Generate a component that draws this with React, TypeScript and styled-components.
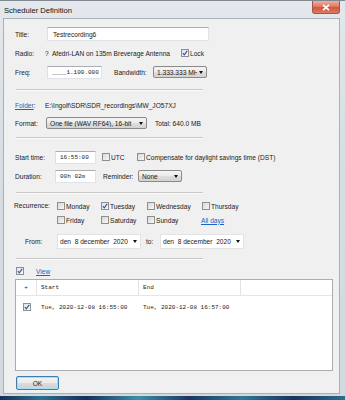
import React from 'react';
import styled, { createGlobalStyle } from 'styled-components';

const GlobalStyle = createGlobalStyle`
  html, body {
    margin: 0;
    padding: 0;
  }
  body {
    width: 345px;
    height: 400px;
    overflow: hidden;
    font-family: "Liberation Sans", Arial, sans-serif;
    font-size: 6.6px;
    color: #1a1a1a;
  }
`;

const Desktop = styled.div`
  width: 345px;
  height: 400px;
  display: flex;
  flex-direction: column;
  background: linear-gradient(90deg, #16305a, #2b7090 12%, #152f5c 25%, #3a91a8 40%, #1b3662 55%, #2e7a96 70%, #183360 85%, #2d6c8c);
`;

const Window = styled.div`
  height: 396px;
  box-sizing: border-box;
  display: flex;
  flex-direction: column;
  padding: 0 5px 2px 3px;
  background: linear-gradient(#e4e8ec, #d8dde3 40%, #d3d9df);
  border-top: 1px solid #7f8891;
`;

const TitleBar = styled.div`
  height: 17px;
  display: flex;
  align-items: flex-start;
  justify-content: space-between;
`;

const Caption = styled.span`
  font-size: 7.6px;
  color: #111;
  margin-top: 5px;
  padding-left: 1px;
`;

const CloseButton = styled.div`
  width: 28px;
  height: 13px;
  box-sizing: border-box;
  display: flex;
  align-items: center;
  justify-content: center;
  border: 1px solid #a4564a;
  border-top: none;
  border-radius: 0 0 3px 3px;
  background: linear-gradient(#eeb0a2, #e07a66 45%, #d4553f 55%, #e07a62);
`;

const Panel = styled.div`
  flex: 1;
  display: flex;
  flex-direction: column;
  background: #f0f0f0;
  border: 1px solid #a9b0b8;
  padding: 7px 0 0 11px;
`;

const Row = styled.div<{ h?: number; mt?: number }>`
  display: flex;
  align-items: center;
  height: ${p => p.h ?? 16}px;
  margin-top: ${p => p.mt ?? 0}px;
  white-space: nowrap;
`;

const Label = styled.span<{ w: number; indent?: number; ml?: number }>`
  flex: none;
  width: ${p => p.w}px;
  padding-left: ${p => p.indent ?? 0}px;
  margin-left: ${p => p.ml ?? 0}px;
  box-sizing: border-box;
`;

const Text = styled.span<{ ml?: number; w?: number }>`
  flex: none;
  margin-left: ${p => p.ml ?? 0}px;
  ${p => (p.w ? `width: ${p.w}px;` : '')}
`;

const TextBox = styled.div<{ w: number; h?: number; mono?: boolean }>`
  flex: none;
  width: ${p => p.w}px;
  height: ${p => p.h ?? 14}px;
  box-sizing: border-box;
  display: flex;
  align-items: center;
  padding-left: ${p => (p.mono ? 4 : 5)}px;
  background: #fff;
  border: 1px solid #e2e3ea;
  border-top-color: #abadb3;
  border-left-color: #dbdfe6;
  font-family: ${p => (p.mono ? '"Liberation Mono", "Courier New", monospace' : 'inherit')};
  font-size: ${p => (p.mono ? '6px' : 'inherit')};
`;

const Combo = styled.div<{ w: number }>`
  flex: none;
  width: ${p => p.w}px;
  height: 12px;
  box-sizing: border-box;
  display: flex;
  align-items: center;
  padding: 0 3px;
  border: 1px solid #8a8a8a;
  border-radius: 2px;
  background: linear-gradient(#f4f4f4, #ebebeb 50%, #dedede 51%, #d3d3d3);
`;

const ComboText = styled.span`
  flex: 1;
  overflow: hidden;
`;

const Arrow = styled.span`
  flex: none;
  width: 0;
  height: 0;
  margin-left: 2px;
  border-left: 2.5px solid transparent;
  border-right: 2.5px solid transparent;
  border-top: 3px solid #111;
`;

const DatePicker = styled.div<{ w: number }>`
  flex: none;
  width: ${p => p.w}px;
  height: 15px;
  box-sizing: border-box;
  display: flex;
  align-items: center;
  padding: 0 3px 0 2px;
  background: #fff;
  border: 1px solid #e3e3e3;
`;

const Separator = styled.div<{ mt: number }>`
  width: 187px;
  height: 1px;
  margin: ${p => p.mt}px 0 0 1px;
  background: #c8c8c8;
  border-bottom: 1px solid #fbfbfb;
`;

const Link = styled.span<{ ml?: number }>`
  flex: none;
  color: #1b63c6;
  text-decoration: underline;
  margin-left: ${p => p.ml ?? 0}px;
`;

const CheckItem = styled.span<{ w?: number; ml?: number }>`
  flex: none;
  display: flex;
  align-items: center;
  gap: 1px;
  margin-left: ${p => p.ml ?? 0}px;
  ${p => (p.w ? `width: ${p.w}px;` : '')}
`;

const Box = styled.span<{ on?: boolean }>`
  flex: none;
  width: 8px;
  height: 8px;
  box-sizing: border-box;
  display: flex;
  align-items: center;
  justify-content: center;
  border: 1px solid #8e8f8f;
  background: ${p =>
    p.on
      ? 'linear-gradient(135deg, #dde4f0, #f6f8fc)'
      : 'linear-gradient(135deg, #d8d8d8, #f7f7f7)'};
`;

const RecurGrid = styled.div`
  display: grid;
  grid-template-columns: 44px 46px 55px auto;
  grid-auto-rows: 14px;
  align-items: center;
`;

const ListBox = styled.div`
  width: 318px;
  height: 92px;
  margin-top: 1px;
  box-sizing: border-box;
  background: #fff;
  border: 1px solid #a9acb2;
  display: flex;
  flex-direction: column;
  font-family: "Liberation Mono", "Courier New", monospace;
  font-size: 6px;
`;

const ListRow = styled.div<{ header?: boolean }>`
  display: grid;
  grid-template-columns: 21px 102px 102px 1fr;
  height: ${p => (p.header ? 15 : 14)}px;
  align-items: center;
  ${p => (p.header ? 'border-bottom: 1px solid #e5e5e5; margin-bottom: 4px;' : '')}
`;

const Cell = styled.span<{ header?: boolean; center?: boolean }>`
  height: 100%;
  display: flex;
  align-items: center;
  justify-content: ${p => (p.center ? 'center' : 'flex-start')};
  padding-left: ${p => (p.center ? 0 : 4)}px;
  ${p => (p.header ? 'border-right: 1px solid #e3e3e3;' : '')}
`;

const OkButton = styled.div`
  width: 43px;
  height: 14px;
  margin: 5px 0 0 1px;
  box-sizing: border-box;
  display: flex;
  align-items: center;
  justify-content: center;
  border: 1px solid #3c7fb1;
  border-radius: 2px;
  box-shadow: inset 0 0 0 1px #a6e0f7;
  background: linear-gradient(#f2f2f2, #ebebeb 50%, #dddddd 51%, #cfcfcf);
`;

const Tick = () => (
  <svg width="6" height="6" viewBox="0 0 6 6">
    <path d="M0.8 3.2 L2.3 4.8 L5.2 0.9" fill="none" stroke="#3b4f8c" strokeWidth="1.1" />
  </svg>
);

const Check: React.FC<{ on?: boolean }> = ({ on }) => <Box on={on}>{on && <Tick />}</Box>;

const App: React.FC = () => {
  return (
    <Desktop>
      <GlobalStyle />
      <Window>
        <TitleBar>
          <Caption>Scheduler Definition</Caption>
          <CloseButton>
            <svg width="8" height="7" viewBox="0 0 8 7">
              <path d="M1 0.8 L7 6.2 M7 0.8 L1 6.2" stroke="#fff" strokeWidth="1.6" />
            </svg>
          </CloseButton>
        </TitleBar>
        <Panel>
          <Row>
            <Label w={32}>Title:</Label>
            <TextBox w={162}>Testrecording6</TextBox>
          </Row>
          <Row mt={3}>
            <Label w={30}>Radio:</Label>
            <Text w={136}>?&nbsp; Afedri-LAN on 135m Breverage Antenna</Text>
            <CheckItem>
              <Check on />
              Lock
            </CheckItem>
          </Row>
          <Row mt={3}>
            <Label w={32}>Freq:</Label>
            <TextBox w={55} h={13} mono>
              ____1.100.000
            </TextBox>
            <Label w={39} ml={12}>
              Bandwidth:
            </Label>
            <Combo w={54}>
              <ComboText>1.333.333 MH</ComboText>
              <Arrow />
            </Combo>
          </Row>
          <Separator mt={9} />
          <Row mt={6}>
            <Label w={30}>
              <Link>Folder</Link>:
            </Label>
            <Text>E:\Ingolf\SDR\SDR_recordings\MW_JO57XJ</Text>
          </Row>
          <Row mt={2}>
            <Label w={31}>Format:</Label>
            <Combo w={101}>
              <ComboText>One file (WAV RF64), 16-bit</ComboText>
              <Arrow />
            </Combo>
            <Text ml={8}>Total: 640.0 MB</Text>
          </Row>
          <Separator mt={6} />
          <Row mt={10}>
            <Label w={40}>Start time:</Label>
            <TextBox w={41} h={13} mono>
              16:55:00
            </TextBox>
            <CheckItem w={35} ml={6}>
              <Check />
              UTC
            </CheckItem>
            <CheckItem>
              <Check />
              Compensate for daylight savings time (DST)
            </CheckItem>
          </Row>
          <Row mt={3}>
            <Label w={40}>Duration:</Label>
            <TextBox w={41} h={13} mono>
              00h 02m
            </TextBox>
            <Label w={35} ml={7}>
              Reminder:
            </Label>
            <Combo w={44}>
              <ComboText>None</ComboText>
              <Arrow />
            </Combo>
          </Row>
          <Separator mt={8} />
          <Row h={28} mt={5} style={{ alignItems: 'flex-start' }}>
            <Label w={43} ml={-1} style={{ marginTop: 3 }}>
              Recurrence:
            </Label>
            <RecurGrid>
              <CheckItem>
                <Check />
                Monday
              </CheckItem>
              <CheckItem>
                <Check on />
                Tuesday
              </CheckItem>
              <CheckItem>
                <Check />
                Wednesday
              </CheckItem>
              <CheckItem>
                <Check />
                Thursday
              </CheckItem>
              <CheckItem>
                <Check />
                Friday
              </CheckItem>
              <CheckItem>
                <Check />
                Saturday
              </CheckItem>
              <CheckItem>
                <Check />
                Sunday
              </CheckItem>
              <Link ml={-1}>All days</Link>
            </RecurGrid>
          </Row>
          <Row mt={6}>
            <Label w={42} indent={10}>
              From:
            </Label>
            <DatePicker w={84}>
              <ComboText>den&nbsp; 8 december&nbsp; 2020</ComboText>
              <Arrow />
            </DatePicker>
            <Label w={14} ml={5}>
              to:
            </Label>
            <DatePicker w={84}>
              <ComboText>den&nbsp; 8 december&nbsp; 2020</ComboText>
              <Arrow />
            </DatePicker>
          </Row>
          <Separator mt={9} />
          <Row h={14} mt={4}>
            <CheckItem ml={1}>
              <Check on />
            </CheckItem>
            <Link ml={12}>View</Link>
          </Row>
          <ListBox>
            <ListRow header>
              <Cell header center>
                +
              </Cell>
              <Cell header>Start</Cell>
              <Cell header>End</Cell>
              <Cell />
            </ListRow>
            <ListRow>
              <Cell center>
                <Check on />
              </Cell>
              <Cell>Tue, 2020-12-08 16:55:00</Cell>
              <Cell>Tue, 2020-12-08 16:57:00</Cell>
              <Cell />
            </ListRow>
          </ListBox>
          <OkButton>OK</OkButton>
        </Panel>
      </Window>
    </Desktop>
  );
};

export default App;
